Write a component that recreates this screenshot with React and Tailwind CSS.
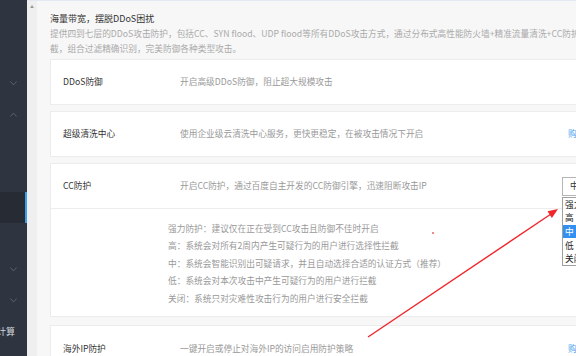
import React from "react";

const navRows = [
  { kind: "blank" },
  { kind: "blank" },
  { kind: "down" },
  { kind: "up" },
  { kind: "blank" },
  { kind: "blank" },
  { kind: "active" },
  { kind: "blank" },
  { kind: "down" },
  { kind: "down" },
  { kind: "label", text: "云计算" },
];

const levels = [
  "强力防护：建议仅在正在受到CC攻击且防御不佳时开启",
  "高：系统会对所有2周内产生可疑行为的用户进行选择性拦截",
  "中：系统会智能识别出可疑请求，并且自动选择合适的认证方式（推荐）",
  "低：系统会对本次攻击中产生可疑行为的用户进行拦截",
  "关闭：系统只对灾难性攻击行为的用户进行安全拦截",
];

const options = ["强力", "高", "中", "低", "关闭"];

const Chevron = ({ up }) => (
  <svg width="7" height="5" viewBox="0 0 7 5" className="text-[#5c6470]">
    <polyline
      points={up ? "0.5,4.5 3.5,1 6.5,4.5" : "0.5,0.5 3.5,4 6.5,0.5"}
      fill="none"
      stroke="currentColor"
      strokeWidth="0.9"
    />
  </svg>
);

const Sidebar = () => (
  <div className="w-[27px] shrink-0 bg-[#2f3540] pt-[6px] flex flex-col overflow-hidden">
    {navRows.map((row, i) => {
      if (row.kind === "active") {
        return (
          <div key={i} className="h-[31px] shrink-0 bg-[#272b33] border-r-2 border-[#3d9cf0]" />
        );
      }
      if (row.kind === "label") {
        return (
          <div
            key={i}
            className="h-[31px] shrink-0 flex items-center justify-end pr-[12px] whitespace-nowrap text-[9px] text-[#d3d7dd]"
          >
            {row.text}
          </div>
        );
      }
      return (
        <div key={i} className="h-[31px] shrink-0 flex items-center justify-end pr-[10px]">
          {row.kind === "down" && <Chevron />}
          {row.kind === "up" && <Chevron up />}
        </div>
      );
    })}
  </div>
);

const Row = ({ title, desc, right }) => (
  <div className="h-[44px] flex items-center">
    <div className="w-[129px] shrink-0 pl-[12px] text-[#333]">{title}</div>
    <div className="w-[388px] shrink-0 text-[#999]">{desc}</div>
    {right}
  </div>
);

const Buy = () => <span className="text-[#4a9ff0]">购买</span>;

const Card = ({ children, className = "" }) => (
  <div className={`bg-white border border-[#ececec] ${className}`}>{children}</div>
);

const CCSelect = () => (
  <div className="relative -ml-[6px]">
    <div className="w-[50px] h-[19px] border border-[#b5b5b5] bg-white pl-[7px] flex items-center text-[#333]">
      中
    </div>
    <div className="absolute left-0 top-[20px] w-[50px] border border-[#a0a0a0] bg-white text-[#222] z-10">
      {options.map((o) => (
        <div
          key={o}
          className={`h-[13.6px] flex items-center pl-[2px] whitespace-nowrap ${
            o === "中" ? "bg-[#3390f0] text-white" : ""
          }`}
        >
          {o}
        </div>
      ))}
    </div>
  </div>
);

export default function App() {
  return (
    <div className="relative w-[576px] h-[356px] overflow-hidden flex font-['Noto_Sans_CJK_SC',sans-serif] text-[8.7px]">
      <Sidebar />
      <div className="flex-1 flex border-t border-[#e2e9f2] overflow-hidden">
        <div className="w-[10px] shrink-0 bg-[#efefef] flex justify-center pt-[4px]">
          <svg width="4" height="3" viewBox="0 0 4 3">
            <polygon points="0,3 2,0 4,3" fill="#9a9a9a" />
          </svg>
        </div>
        <div className="flex-1 bg-[#f7f7f7] pl-[13px] overflow-hidden">
          <div className="w-[570px]">
            <div className="pt-[10px] leading-[15px] text-[9px] text-[#333] whitespace-nowrap">
              海量带宽，摆脱DDoS困扰
            </div>
            <div className="leading-[15px] text-[#aaa] whitespace-nowrap">
              <div>
                提供四到七层的DDoS攻击防护，包括CC、SYN flood、UDP flood等所有DDoS攻击方式，通过分布式高性能防火墙+精准流量清洗+CC防护拦
              </div>
              <div>截，组合过滤精确识别，完美防御各种类型攻击。</div>
            </div>

            <div className="mt-[3px] flex flex-col">
              <Card className="mb-[6px]">
                <Row title="DDoS防御" desc="开启高级DDoS防御，阻止超大规模攻击" />
              </Card>
              <Card className="mb-[6px]">
                <Row
                  title="超级清洗中心"
                  desc="使用企业级云清洗中心服务，更快更稳定，在被攻击情况下开启"
                  right={<Buy />}
                />
              </Card>
              <Card className="mb-[8px]">
                <Row
                  title="CC防护"
                  desc="开启CC防护，通过百度自主开发的CC防御引擎，迅速阻断攻击IP"
                  right={<CCSelect />}
                />
                <div className="relative border-t border-[#ededed] pl-[117px] pt-[11px] pb-[9px] leading-[17.4px] text-[#999] whitespace-nowrap">
                  {levels.map((l) => (
                    <div key={l}>{l}</div>
                  ))}
                  <span className="absolute left-[381px] top-[23px] w-[2px] h-[2px] bg-[#f08a8a]" />
                </div>
              </Card>
              <Card>
                <Row
                  title="海外IP防护"
                  desc="一键开启或停止对海外IP的访问启用防护策略"
                  right={<Buy />}
                />
              </Card>
            </div>
          </div>
        </div>
      </div>

      <svg
        className="absolute inset-0 pointer-events-none z-20"
        width="576"
        height="356"
        viewBox="0 0 576 356"
      >
        <line x1="368" y1="337" x2="551" y2="214" stroke="#f0262a" strokeWidth="1.4" />
        <polygon points="558,209 551.9,217.9 547.5,211.3" fill="#f0262a" />
      </svg>
    </div>
  );
}
